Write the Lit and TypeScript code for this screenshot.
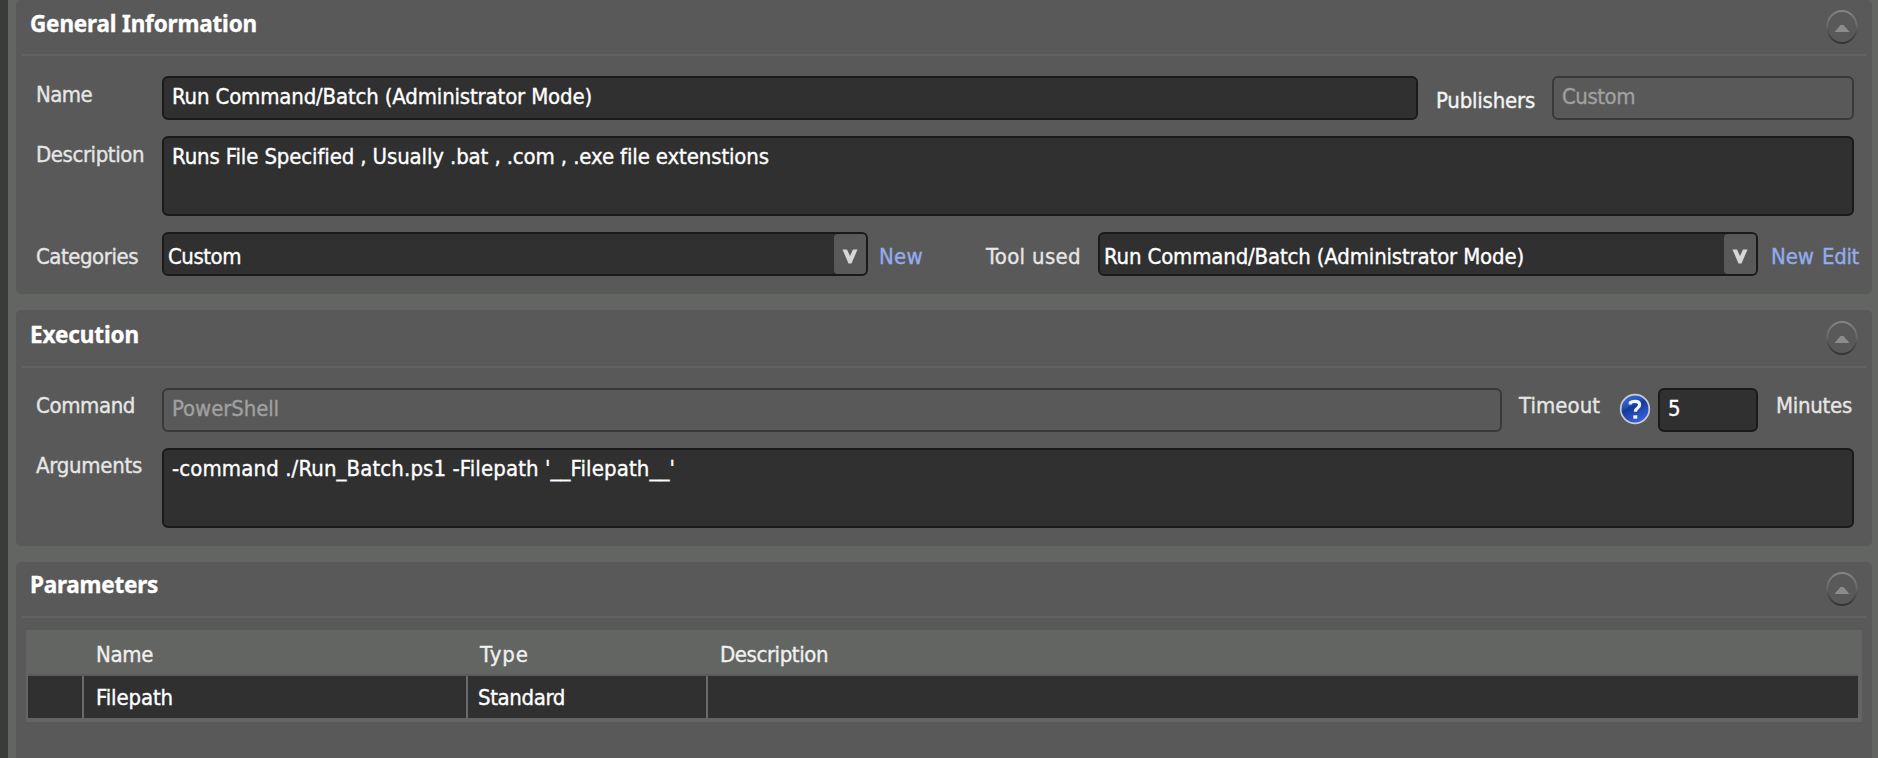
import { LitElement, html, css } from "lit";
import { customElement, property } from "lit/decorators.js";

/** One line of text, tracked so that it fills the given width. */
@customElement("ui-text")
class UiText extends LitElement {
  @property({ type: Number }) w = 0;
  @property() text = "";
  static styles = css`
    :host { display: block; white-space: pre; }
    .run { display: inline-block; -webkit-text-stroke: 0.35px currentColor; }
  `;
  render() {
    return html`<span class="run">${this.text}</span>`;
  }
  updated() {
    const run = this.renderRoot.querySelector(".run") as HTMLElement;
    run.style.letterSpacing = "0px";
    const natural = run.getBoundingClientRect().width;
    const gap = (this.w - natural) / this.text.length;
    run.style.letterSpacing = `${gap.toFixed(3)}px`;
  }
}

@customElement("ui-panel")
class UiPanel extends LitElement {
  @property() heading = "";
  @property({ type: Number }) w = 0;
  static styles = css`
    :host { display: block; background: #595959; border-radius: 5px; }
    .head { display: flex; justify-content: space-between; height: var(--head, 54px); margin: 0 6px; border-bottom: 2px solid #636363; box-sizing: content-box; }
    .title { margin: var(--title-top, 10px) 0 0 8px; font: bold 22.5px/28px "Noto Sans", sans-serif; color: #fff; }
    .toggle { display: block; width: 34px; height: 38px; margin: var(--toggle-top, 8px) 7px 0 0; }
  `;
  render() {
    return html`
      <div class="head">
        <ui-text class="title" .w=${this.w} .text=${this.heading}></ui-text>
        <svg class="toggle" viewBox="0 0 34 38">
          <defs>
            <linearGradient id="ring" x1="0" y1="0" x2="0" y2="1">
              <stop offset="0" stop-color="#858585" />
              <stop offset=".5" stop-color="#666" />
              <stop offset=".65" stop-color="#505050" />
              <stop offset="1" stop-color="#333" />
            </linearGradient>
          </defs>
          <ellipse cx="17" cy="19" rx="14.8" ry="16" fill="none" stroke="url(#ring)" stroke-width="1.8" />
          <path d="M9.500 24 L15.500 17 h3 L24.500 24z" fill="#8c8a8c" />
        </svg>
      </div>
      <slot></slot>
    `;
  }
}

@customElement("app-root")
class AppRoot extends LitElement {
  static styles = css`
    * { box-sizing: border-box; }
    :host {
      display: block; height: 758px; overflow: hidden; background: #626561;
      border-left: 8px solid #3b3c39; padding: 0 6px 0 8px;
      font: 22px/28px "DejaVu Sans Condensed", "DejaVu Sans", sans-serif; font-stretch: condensed; color: #fff;
    }
    .stack { display: flex; flex-direction: column; gap: 16px; }
    .general { height: 294px; }
    .exec { height: 236px; --head: 56px; --title-top: 11px; --toggle-top: 9px; }
    .params { height: 210px; --title-top: 9px; }
    .rows { display: flex; flex-direction: column; gap: 16px; padding: 20px 18px 0 20px; }
    .row { display: flex; height: 44px; }
    .row.tall { height: 80px; }
    .label { flex: none; width: 126px; color: #e6e6e6; padding-top: var(--drop, 5px); }
    .exec .label { --drop: 4px; }
    .pick .label { --drop: 11px; }
    .field { flex: 1; background: #303030; border: 2px solid #1a1a1a; border-radius: 6px; padding: 5px 0 0 8px; }
    .field.off { background: none; border-color: #393939; color: #a0a0a0; }
    .label.pub { width: 134px; padding: 11px 0 0 18px; color: #f4f4f4; }
    .field.publisher { flex: none; width: 302px; }
    .field.select { display: flex; justify-content: space-between; padding: 0 0 0 4px; }
    .select .value { padding-top: 9px; }
    .drop { width: 32px; height: 40px; background: #595959; border-radius: 4px; }
    .field.cat { flex: none; width: 706px; }
    .field.tool { flex: none; width: 660px; }
    .link { flex: none; color: #92acec; padding: 11px 0 0 11px; }
    .link.first { width: 118px; }
    .link.new { padding-left: 13px; width: 64px; }
    .link.edit { padding-left: 0; }
    .label.tool-label { width: 112px; }
    .pick { margin-right: -30px; }
    .label.timeout { width: 116px; padding-left: 17px; }
    .help { flex: none; width: 34px; height: 34px; margin: 4px 6px 0 0; }
    .field.minutes { flex: none; width: 100px; }
    .label.unit { width: 96px; padding-left: 18px; }
    .table { margin: 12px 10px 0; height: 92px; background: #626561; padding: 0 4px 0 2px; }
    .thead, .tr { display: grid; grid-template-columns: 54px 382px 238px 1fr; column-gap: 2px; }
    .thead { height: 46px; border-bottom: 2px solid #5b5c5a; padding-top: 11px; color: #f0f0f0; }
    .tr { height: 42px; background: #6a6a6a; }
    .td { background: #303030; padding: 8px 0 0 12px; }
    .th { padding-left: 12px; }
    .td.type { padding-left: 10px; }
    .th.type { padding-left: 12px; }
  `;
  private arrow() {
    return html`<svg class="drop" viewBox="0 0 32 40">
      <path d="M8.500 15.500h4.500l3 6.500 3-6.500h4.500L17.500 29.500h-3z" fill="#d6d6d6" />
    </svg>`;
  }
  private t(text: string, w: number, cls = "") {
    return html`<ui-text class=${cls} .text=${text} .w=${w}></ui-text>`;
  }
  render() {
    return html`<div class="stack">
      <ui-panel class="general" heading="General Information" w="227">
        <div class="rows">
          <div class="row">
            ${this.t("Name", 56, "label")}
            <div class="field">${this.t("Run Command/Batch (Administrator Mode)", 420)}</div>
            ${this.t("Publishers", 99, "label pub")}
            <div class="field off publisher">${this.t("Custom", 73)}</div>
          </div>
          <div class="row tall">
            ${this.t("Description", 108, "label")}
            <div class="field">${this.t("Runs File Specified , Usually .bat , .com , .exe file extenstions", 597)}</div>
          </div>
          <div class="row pick">
            ${this.t("Categories", 102, "label")}
            <div class="field select cat">${this.t("Custom", 73, "value")}${this.arrow()}</div>
            ${this.t("New", 44, "link first")}
            ${this.t("Tool used", 95, "label tool-label")}
            <div class="field select tool">${this.t("Run Command/Batch (Administrator Mode)", 420, "value")}${this.arrow()}</div>
            ${this.t("New", 43, "link new")}
            ${this.t("Edit", 37, "link edit")}
          </div>
        </div>
      </ui-panel>
      <ui-panel class="exec" heading="Execution" w="109">
        <div class="rows">
          <div class="row">
            ${this.t("Command", 99, "label")}
            <div class="field off">${this.t("PowerShell", 107)}</div>
            ${this.t("Timeout", 81, "label timeout")}
            <svg class="help" viewBox="0 0 34 34">
              <defs>
                <linearGradient id="ball" x1="0" y1="0" x2=".5" y2="1">
                  <stop offset="0" stop-color="#3f74e0" />
                  <stop offset=".42" stop-color="#2450b8" />
                  <stop offset=".5" stop-color="#123a98" />
                  <stop offset="1" stop-color="#3a5ce0" />
                </linearGradient>
              </defs>
              <circle cx="17" cy="17" r="14.300" fill="url(#ball)" stroke="#c9ccd4" stroke-width="1.700" />
              <path d="M12.300 12.500v-1.800q1.500-1.400 4.700-1.400 4.600 0 4.600 3.500 0 2-2.300 3.500-2 1.200-2 3.500" fill="none" stroke="#f4f4f8" stroke-width="3.200" />
              <rect x="15.300" y="23.300" width="4" height="3.400" fill="#f4f4f8" />
            </svg>
            <div class="field minutes">${this.t("5", 13)}</div>
            ${this.t("Minutes", 76, "label unit")}
          </div>
          <div class="row tall">
            ${this.t("Arguments", 106, "label")}
            <div class="field">${this.t("-command ./Run_Batch.ps1 -Filepath '__Filepath__'", 503)}</div>
          </div>
        </div>
      </ui-panel>
      <ui-panel class="params" heading="Parameters" w="128">
        <div class="table">
          <div class="thead">
            <div class="th"></div>
            ${this.t("Name", 57, "th")}
            ${this.t("Type", 49, "th type")}
            ${this.t("Description", 108, "th")}
          </div>
          <div class="tr">
            <div class="td"></div>
            ${this.t("Filepath", 77, "td")}
            ${this.t("Standard", 87, "td type")}
            <div class="td"></div>
          </div>
        </div>
      </ui-panel>
    </div>`;
  }
}
